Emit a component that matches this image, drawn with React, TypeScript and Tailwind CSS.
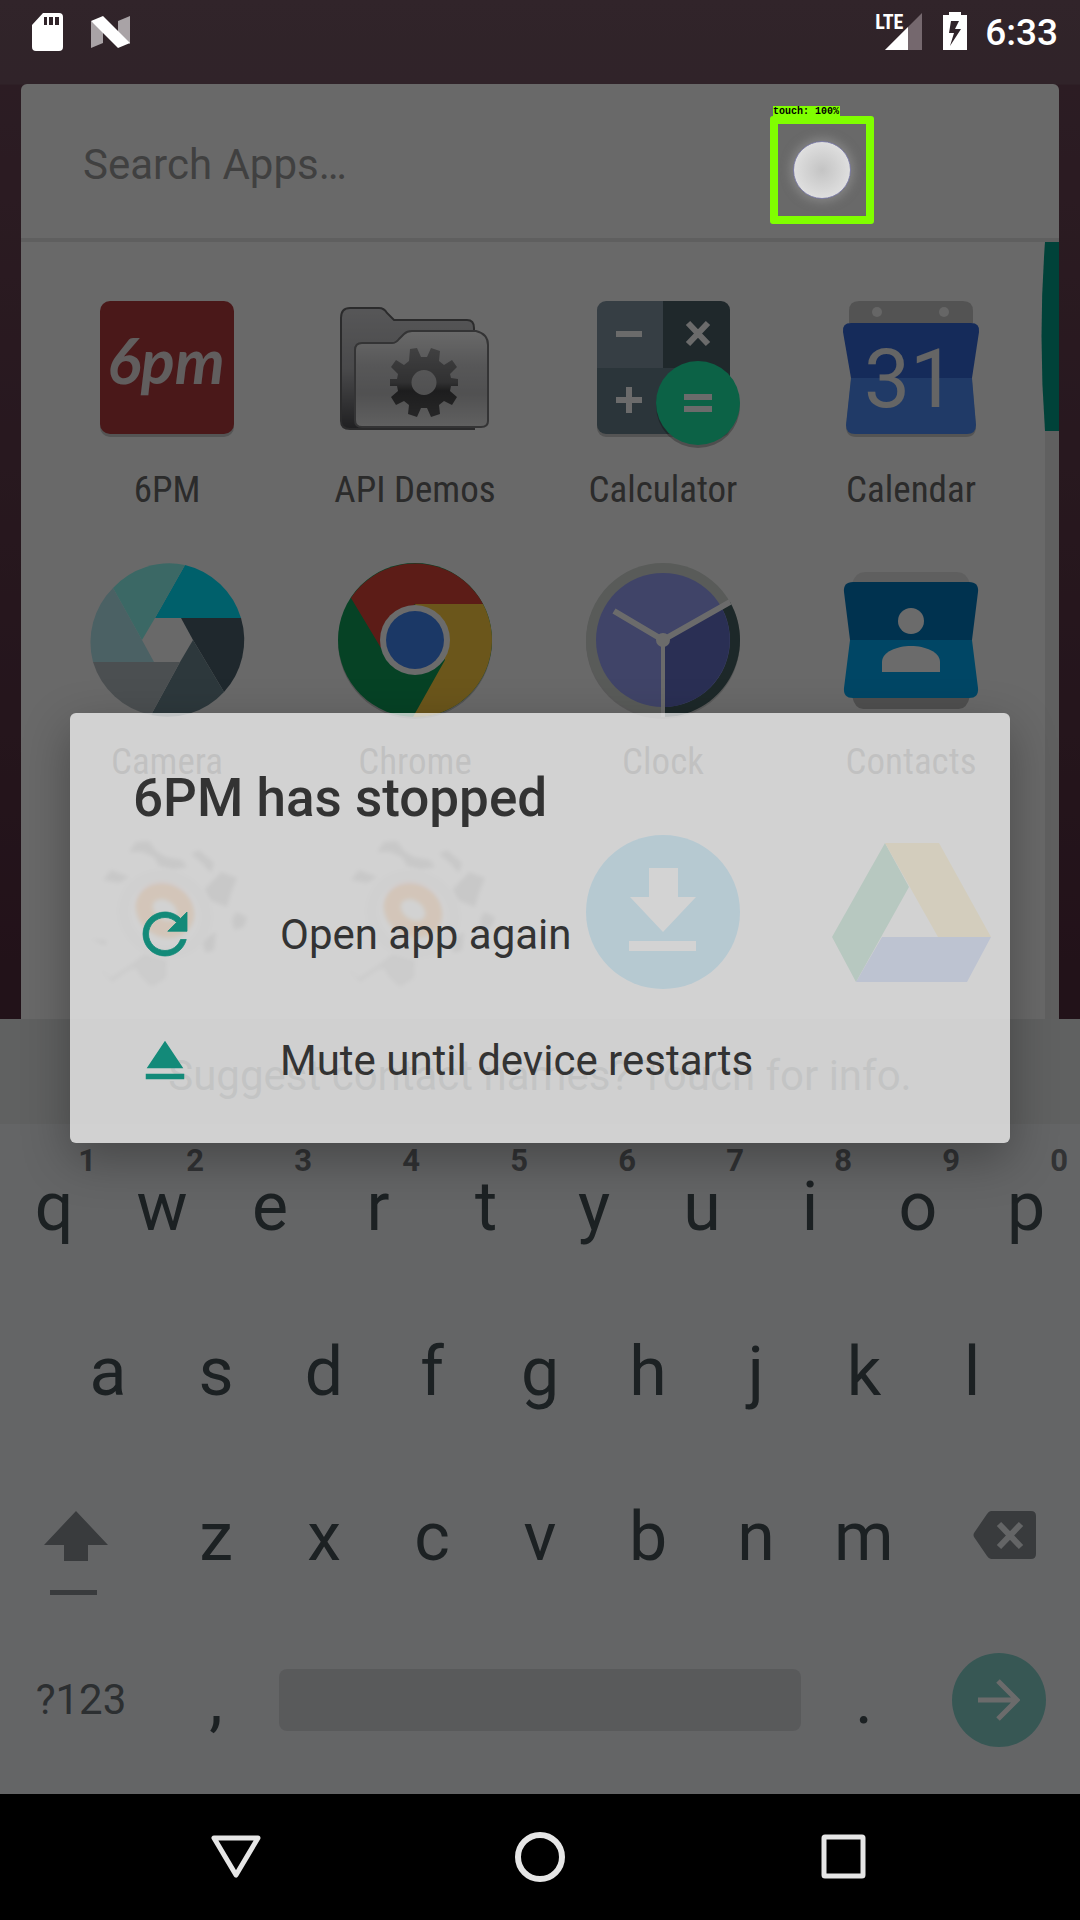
import type { ReactNode } from "react";

/* ---------- launcher icons (160 x 160 grid) ---------- */

function IconFrame({ children }: { children: ReactNode }) {
  return (
    <svg viewBox="0 0 160 160" className="size-[160px] overflow-visible" aria-hidden="true">
      {children}
    </svg>
  );
}

function SixPmIcon() {
  return (
    <IconFrame>
      <rect x="13" y="17" width="134" height="132" rx="10" fill="#000" opacity="0.2" />
      <rect x="13" y="13" width="134" height="133" rx="10" fill="#b03a3d" />
      <text x="79" y="96" textAnchor="middle" fontFamily="Lato, sans-serif" fontStyle="italic" fontWeight="700" fontSize="63" fill="#e6e0e0">
        6pm
      </text>
    </IconFrame>
  );
}

function FolderIcon() {
  return (
    <IconFrame>
      <defs>
        <linearGradient id="folderBack" x1="0" y1="0" x2="0" y2="1">
          <stop offset="0" stopColor="#cfcfd2" />
          <stop offset="0.5" stopColor="#b0b0b4" />
          <stop offset="1" stopColor="#4c4c50" />
        </linearGradient>
        <linearGradient id="folderFront" x1="0" y1="0" x2="0" y2="1">
          <stop offset="0" stopColor="#fbfbfb" />
          <stop offset="0.35" stopColor="#d0d0d2" />
          <stop offset="0.65" stopColor="#c0c0c2" />
          <stop offset="1" stopColor="#e6e6e6" />
        </linearGradient>
        <linearGradient id="folderGear" x1="0" y1="0" x2="0" y2="1">
          <stop offset="0" stopColor="#9a9a9c" />
          <stop offset="0.5" stopColor="#747476" />
          <stop offset="0.62" stopColor="#464648" />
          <stop offset="1" stopColor="#5c5c5e" />
        </linearGradient>
      </defs>
      <path
        d="M15 20H44Q49 20 52 25L59 32H132Q139 32 139 40V141H15Q6 141 6 133V30Q6 20 15 20Z"
        fill="url(#folderBack)"
        stroke="#68686a"
        strokeWidth="2"
      />
      <path
        d="M27 55H57Q61 55 64 51L69 46Q72 43 77 43H141Q153 46 153 57V133Q153 139 146 139H27Q20 139 20 132V62Q20 55 27 55Z"
        fill="url(#folderFront)"
        stroke="#7c7c7e"
        strokeWidth="2"
      />
      <g fill="url(#folderGear)">
        <path
          fillRule="evenodd"
          d="M75 61L82 60L86 69H92L96 60L105 63L104 73L109 77L117 72L122 79L115 86L116 90L123 91V98H116L115 103L122 109L117 117L109 113L104 117L105 126L96 129L92 120H86L82 129L73 126L74 117L69 113L61 117L56 109L63 103L62 98H55V91H62L63 86L56 79L61 72L69 77L74 73ZM89 82A12.500 12.500 0 1 0 89 107A12.500 12.500 0 1 0 89 82Z"
        />
      </g>
    </IconFrame>
  );
}

function CalculatorIcon() {
  return (
    <IconFrame>
      <defs>
        <clipPath id="calcBody">
          <rect x="14" y="13" width="133" height="133" rx="9" />
        </clipPath>
      </defs>
      <rect x="14" y="16" width="133" height="133" rx="9" fill="#000" opacity="0.2" />
      <g clipPath="url(#calcBody)">
        <rect x="14" y="13" width="66" height="67" fill="#8294a3" />
        <rect x="80" y="13" width="67" height="133" fill="#4a6068" />
        <rect x="14" y="80" width="66" height="66" fill="#667f8a" />
        <rect x="80" y="80" width="30" height="66" fill="#667f8a" />
      </g>
      <circle cx="115" cy="118" r="42" fill="#000" opacity="0.25" />
      <circle cx="115" cy="115" r="42" fill="#1de9a6" />
      <g stroke="#fff" strokeWidth="6" fill="none">
        <path d="M33 46H59M33 112H59M46 99V125M105 35L125 56M125 35L105 56M101 109H129M101 121H129" />
      </g>
    </IconFrame>
  );
}

function CalendarIcon() {
  return (
    <IconFrame>
      <path d="M18 35V23Q18 13 28 13H132Q142 13 142 23V35Z" fill="#c6c6c6" />
      <circle cx="46" cy="24" r="5" fill="#f2f2f2" />
      <circle cx="113" cy="24" r="5" fill="#f2f2f2" />
      <path d="M20 93L15 138Q15 149 25 149H135Q145 149 145 138L141 93Z" fill="#000" opacity="0.2" />
      <path d="M20 35H140Q149 35 148 44L141 90H20L12 44Q11 35 20 35Z" fill="#3367d6" />
      <path d="M20 90H141L145 137Q145 146 136 146H24Q15 146 15 137Z" fill="#4c8bf5" />
      <text x="79" y="119" textAnchor="middle" fontFamily="Roboto, sans-serif" fontSize="82" fill="#f0f0f0">
        31
      </text>
    </IconFrame>
  );
}

function CameraIcon() {
  return (
    <IconFrame>
      <path d="M68 58L98 5A77 77 0 0 1 154 58Z" fill="#00e5ff" />
      <path d="M94 58H154A77 77 0 0 1 137 132L106 80Z" fill="#4a606c" />
      <path d="M106 80L137 132A77 77 0 0 1 64 155L93 102Z" fill="#6c858f" />
      <path d="M93 102L64 155A77 77 0 0 1 6 102Z" fill="#b3bdc2" />
      <path d="M67 102H6A77 77 0 0 1 26 28L55 80Z" fill="#b2e6ee" />
      <path d="M55 80L26 28A77 77 0 0 1 98 5L68 58Z" fill="#8cf7f0" />
    </IconFrame>
  );
}

function ChromeIcon() {
  return (
    <IconFrame>
      <circle cx="80" cy="82" r="77" fill="#000" opacity="0.2" />
      <circle cx="80" cy="80" r="77" fill="#0f9d58" />
      <path d="M80 44H148A77 77 0 0 1 78 157L110 100Z" fill="#ffcd40" />
      <path d="M16 38A77 77 0 0 1 148 44H80L46 88Z" fill="#db4437" />
      <circle cx="80" cy="80" r="35" fill="#fff" />
      <circle cx="80" cy="80" r="29" fill="#4285f4" />
    </IconFrame>
  );
}

function ClockIcon() {
  return (
    <IconFrame>
      <circle cx="80" cy="82" r="77" fill="#000" opacity="0.15" />
      <circle cx="80" cy="80" r="77" fill="#d3d8d4" />
      <path d="M80 80L147 42A77 77 0 0 1 80 157Z" fill="#455f62" />
      <circle cx="80" cy="80" r="67" fill="#98a2f8" />
      <path d="M80 80L138 47A67 67 0 0 1 80 147Z" fill="#6570c8" />
      <g stroke="#fff" fill="none">
        <path d="M80 80L147 42M80 80L31 51" strokeWidth="6" />
        <path d="M80 80V157" strokeWidth="4" />
      </g>
      <circle cx="80" cy="80" r="7" fill="#fff" />
    </IconFrame>
  );
}

function ContactsIcon() {
  return (
    <IconFrame>
      <path d="M21 24Q24 12 34 12H126Q136 12 139 24Z" fill="#e3e3e3" />
      <path d="M21 136H139Q136 149 128 149H32Q24 149 21 136Z" fill="#bdbdbd" />
      <path d="M22 22H138Q148 22 147 32L141 80H19L13 32Q12 22 22 22Z" fill="#0277bd" />
      <path d="M19 80H141L147 128Q148 138 138 138H22Q12 138 13 128Z" fill="#00a8f0" />
      <circle cx="80" cy="61" r="13" fill="#fff" />
      <path d="M51 112V102C51 92 66 86 80 86S109 92 109 102V112Z" fill="#fff" />
    </IconFrame>
  );
}

function GearIcon() {
  return (
    <IconFrame>
      <defs>
        <filter id="gearSoft" x="-10%" y="-10%" width="120%" height="120%">
          <feGaussianBlur stdDeviation="2" />
        </filter>
      </defs>
      <g fill="#a2a2a2" filter="url(#gearSoft)">
        <path d="M42 20L49 10L62 9L69 19L79 25L95 28L100 35L85 38L72 34L67 25L55 20Z" />
        <path d="M104 22L112 18L127 31L124 41L115 31Z" />
        <path d="M16 48L24 38L42 45L32 51Z" />
        <path d="M117 58L134 40L150 46L144 61L140 75L122 68Z" />
        <path d="M149 80L160 85L157 95L147 98L145 88Z" />
        <path d="M114 108L129 100L127 118L119 121Z" />
        <path d="M4 107L20 109L18 113Z" />
        <path d="M12 136L24 146L42 134L59 121L80 128L79 146L65 155L54 145L49 136L42 138L25 150Z" fill="#c0c0c0" />
      </g>
      <g fill="none" filter="url(#gearSoft)">
        <ellipse cx="78" cy="82" rx="42" ry="38" transform="rotate(25 78 82)" stroke="#e6e6e6" strokeWidth="12" />
        <ellipse cx="78" cy="78" rx="22" ry="18" transform="rotate(35 78 78)" stroke="#ff8a1c" strokeWidth="17" />
      </g>
    </IconFrame>
  );
}

function DownloadsIcon() {
  return (
    <IconFrame>
      <circle cx="80" cy="80" r="77" fill="#03a9f4" />
      <path d="M66 36H95V65H113L80 100L47 65H66ZM46 109H113V119H46Z" fill="#fff" />
    </IconFrame>
  );
}

function DriveIcon() {
  return (
    <IconFrame>
      <path d="M54 11L78 55L25 150L1 105Z" fill="#0f9d58" />
      <path d="M54 11H108L160 105H107Z" fill="#ffcd40" />
      <path d="M51 105H160L136 150H25Z" fill="#4272f4" />
    </IconFrame>
  );
}

const apps = [
  { name: "6PM", icon: <SixPmIcon /> },
  { name: "API Demos", icon: <FolderIcon /> },
  { name: "Calculator", icon: <CalculatorIcon /> },
  { name: "Calendar", icon: <CalendarIcon /> },
  { name: "Camera", icon: <CameraIcon /> },
  { name: "Chrome", icon: <ChromeIcon /> },
  { name: "Clock", icon: <ClockIcon /> },
  { name: "Contacts", icon: <ContactsIcon /> },
  { name: "", icon: <GearIcon /> },
  { name: "", icon: <GearIcon /> },
  { name: "", icon: <DownloadsIcon /> },
  { name: "", icon: <DriveIcon /> },
];

/* ---------- status bar ---------- */

function StatusBar() {
  return (
    <header className="relative z-20 flex h-[84px] shrink-0 items-start justify-between pl-8 pr-[22px] pt-3 text-white">
      <div className="flex gap-7">
        <svg width="31" height="39" viewBox="0 0 31 39" aria-label="SD card">
          <path
            fillRule="evenodd"
            d="M11 1H27Q31 1 31 5V35Q31 39 27 39H4Q0 39 0 35V13ZM12 5V13H15V5ZM17 5V13H21V5ZM23 5V13H27V5Z"
            fill="#fff"
          />
        </svg>
        <svg width="39" height="39" viewBox="0 0 39 39" aria-label="Android N">
          <path d="M0 9L12 18V31L0 36ZM39 4L27 9V22L39 32Z" fill="#a9a3a6" />
          <path d="M0 9L12 4L39 31L27 36Z" fill="#fff" />
        </svg>
      </div>
      <div className="flex">
        <div className="relative">
          <svg width="46" height="39" viewBox="0 0 46 39" aria-label="Signal">
            <path d="M46 1V38H9Z" fill="#75686e" />
            <path d="M32 15V38H9Z" fill="#fff" />
          </svg>
          <span className="absolute -left-px -top-px font-['Roboto_Condensed',Roboto,sans-serif] text-[20px] font-bold leading-[22px]">
            LTE
          </span>
        </div>
        <svg className="ml-[21px]" width="24" height="39" viewBox="0 0 24 39" aria-label="Battery charging">
          <path fillRule="evenodd" d="M6 0H18V3H24V38H0V3H6ZM8 9L6 21H11L7 34L18 17H12L16 9Z" fill="#fff" />
        </svg>
        <span className="ml-[18px] text-[37px] font-medium leading-[42px]">6:33</span>
      </div>
    </header>
  );
}

/* ---------- launcher drawer ---------- */

function AppDrawer() {
  return (
    <main className="mx-[21px] flex min-h-0 flex-1 flex-col overflow-hidden rounded-t-md bg-[#fafafa]">
      <div className="flex h-[158px] shrink-0 items-center border-b-4 border-[#e2e2e2] px-[62px] pt-2">
        <input
          type="search"
          aria-label="Search Apps"
          placeholder="Search Apps…"
          className="w-full bg-transparent text-[42px] leading-[50px] outline-none placeholder:text-[#9a9a9a]"
        />
      </div>
      <div className="relative min-h-0 flex-1">
        <div className="grid auto-rows-[272px] grid-cols-4 pl-[22px] pr-6 pt-[46px]">
          {apps.map((app, i) => (
            <button key={i} type="button" className="flex flex-col items-center gap-[18px]">
              {app.icon}
              <span className="font-['Roboto_Condensed',Roboto,sans-serif] text-[37px] leading-[48px] text-[#666]">
                {app.name}
              </span>
            </button>
          ))}
        </div>
        <div className="absolute inset-y-0 right-0 w-[14px] bg-[#e4e4e4]" />
        <svg className="absolute right-0 top-0" width="18" height="189" viewBox="0 0 18 189" aria-hidden="true">
          <path d="M4 0H18V189H4Q-3 94 4 0Z" fill="#009e88" />
        </svg>
      </div>
    </main>
  );
}

/* ---------- keyboard ---------- */

function Key({ label, hint }: { label: string; hint?: string }) {
  return (
    <button type="button" className="relative flex h-[165px] w-[10%] min-w-0 grow justify-center pt-8 text-[68px] leading-[80px]">
      {label}
      {hint && (
        <span className="absolute right-3 top-2 text-[31px] font-bold leading-9 text-[#777b7e]">{hint}</span>
      )}
    </button>
  );
}

function Keyboard() {
  return (
    <section aria-label="Keyboard" className="shrink-0 bg-[#eff1f4] text-[#444f53]">
      <p className="flex h-[105px] items-center justify-center bg-[#e4e6e8] pt-2 text-[42px] text-[#777c80]">
        Suggest contact names? Touch for info.
      </p>
      <div className="pt-[11px]">
        <div className="flex">
          {"qwertyuiop".split("").map((k, i) => (
            <Key key={k} label={k} hint={String((i + 1) % 10)} />
          ))}
        </div>
        <div className="flex px-[5%]">
          {"asdfghjkl".split("").map((k) => (
            <Key key={k} label={k} />
          ))}
        </div>
        <div className="grid grid-cols-[14%_1fr_14%]">
          <button type="button" aria-label="Shift" className="flex flex-col items-center pt-[46px]">
            <svg width="64" height="86" viewBox="0 0 64 86">
              <path d="M32 0L64 34H44V50H20V34H0Z" fill="#888e92" />
              <path d="M6 79H53V84H6Z" fill="#888e92" />
            </svg>
          </button>
          <div className="flex px-[11px]">
            {"zxcvbnm".split("").map((k) => (
              <Key key={k} label={k} />
            ))}
          </div>
          <button type="button" aria-label="Delete" className="flex justify-center pt-[46px]">
            <svg width="63" height="48" viewBox="0 0 63 48">
              <path d="M18 0H58Q63 0 63 5V43Q63 48 58 48H18Q16 48 14 45L1 26Q0 24 1 22L14 3Q16 0 18 0Z" fill="#888e92" />
              <path d="M26 13L48 36M48 13L26 36" stroke="#eff1f4" strokeWidth="6" />
            </svg>
          </button>
        </div>
        <div className="flex h-[164px] items-center pb-[24px]">
          <button type="button" className="w-[15%] text-[42px] leading-[50px] text-[#697175]">
            ?123
          </button>
          <button type="button" className="w-[10%] text-[68px] leading-[80px]">
            ,
          </button>
          <button type="button" aria-label="Space" className="mx-[9px] h-[62px] flex-1 rounded-lg bg-[#d5d7da]" />
          <button type="button" className="w-[10%] text-[68px] leading-[80px]">
            .
          </button>
          <div className="flex w-[15%] justify-center">
            <button type="button" aria-label="Go" className="flex size-[94px] items-center justify-center rounded-full bg-[#83cfc9]">
              <svg width="42" height="42" viewBox="0 0 42 42" fill="none" stroke="#fff" strokeWidth="5">
                <path d="M0 21H38M20 2L39 21L20 40" />
              </svg>
            </button>
          </div>
        </div>
      </div>
    </section>
  );
}

/* ---------- crash dialog ---------- */

function CrashDialog() {
  return (
    <div className="absolute inset-0 z-10 flex items-center bg-black/58 px-[70px] pt-[62px]">
      <div
        role="alertdialog"
        aria-labelledby="crash-title"
        className="w-full rounded-md bg-[#fafafa]/73 pb-5 pt-[55px] text-[#333] shadow-[0_16px_48px_rgba(0,0,0,0.3)]"
      >
        <h1 id="crash-title" className="mb-[43px] px-[63px] text-[53px] font-medium leading-[60px]">
          6PM has stopped
        </h1>
        <button type="button" className="flex h-[126px] w-full items-center gap-[82px] px-[62px] text-[42px]">
          <svg width="66" height="66" viewBox="0 0 24 24" fill="#138a79" stroke="#138a79" strokeWidth="0.3" aria-hidden="true">
            <path d="M17.650 6.350C16.200 4.900 14.210 4 12 4c-4.420 0-7.990 3.580-7.990 8s3.570 8 7.990 8c3.730 0 6.840-2.550 7.730-6h-2.080c-.820 2.330-3.040 4-5.650 4-3.310 0-6-2.690-6-6s2.690-6 6-6c1.660 0 3.140.690 4.220 1.780L13 11h7V4l-2.350 2.350z" />
          </svg>
          Open app again
        </button>
        <button type="button" className="flex h-[126px] w-full items-center gap-[82px] px-[62px] text-[42px]">
          <svg width="66" height="66" viewBox="0 0 24 24" fill="#138a79" aria-hidden="true">
            <path d="M5 17h14v2H5zm7-12L5.330 15h13.340z" />
          </svg>
          Mute until device restarts
        </button>
      </div>
    </div>
  );
}

/* ---------- touch marker drawn over the screen ---------- */

function TouchMarker() {
  return (
    <div className="absolute left-[770px] top-[106px] z-30">
      <div className="relative z-10 ml-[3px] h-3 w-[67px] whitespace-nowrap bg-[#80ff00] font-['Liberation_Mono',monospace] text-[10px] font-bold leading-3 text-black">
        touch: 100%
      </div>
      <div className="-mt-[2px] flex h-[108px] w-[104px] items-center justify-center rounded-[3px] border-8 border-[#80ff00]">
        <div className="size-[58px] rounded-full border border-[#8080a8] bg-[radial-gradient(circle,#c4c4c4_0%,#e0e0e0_75%)] shadow-[0_0_10px_3px_rgba(160,160,160,0.5)]" />
      </div>
    </div>
  );
}

function NavBar() {
  return (
    <nav className="flex h-[126px] shrink-0 items-center justify-center gap-[254px] bg-black">
      <button type="button" aria-label="Back">
        <svg width="50" height="50" viewBox="0 0 50 50" fill="none" stroke="#e6e6e6" strokeWidth="5" strokeLinejoin="round">
          <path d="M3 6H47L25 43Z" />
        </svg>
      </button>
      <button type="button" aria-label="Home">
        <svg width="50" height="50" viewBox="0 0 50 50" fill="none" stroke="#e6e6e6" strokeWidth="6">
          <circle cx="25" cy="25" r="22" />
        </svg>
      </button>
      <button type="button" aria-label="Recents">
        <svg width="50" height="50" viewBox="0 0 50 50" fill="none" stroke="#e6e6e6" strokeWidth="5">
          <rect x="5" y="5" width="39" height="39" rx="1" />
        </svg>
      </button>
    </nav>
  );
}

export default function App() {
  return (
    <div className="relative flex h-screen flex-col overflow-hidden font-['Roboto',sans-serif]">
      <div className="relative flex min-h-0 flex-1 flex-col bg-[linear-gradient(#755664_0,#735562_84px,#694454_85px,#512b3c_1000px)]">
        <StatusBar />
        <AppDrawer />
        <Keyboard />
        <CrashDialog />
      </div>
      <NavBar />
      <TouchMarker />
    </div>
  );
}
